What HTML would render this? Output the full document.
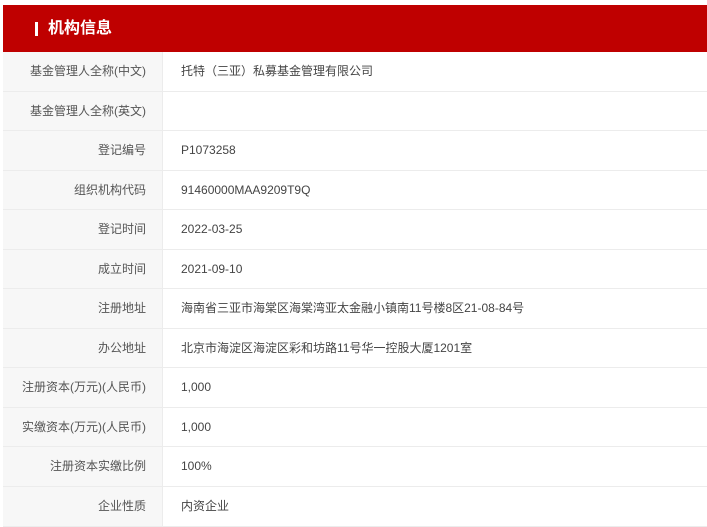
<!DOCTYPE html>
<html><head><meta charset="utf-8"><style>
body{margin:0;width:707px;height:524px;overflow:hidden;background:#fff;font-family:"Liberation Sans","Noto Sans CJK SC",sans-serif;}
.hd{position:absolute;left:3px;top:5px;width:704px;height:47px;background:#bf0000;color:#fff;font-weight:bold;font-size:16px;line-height:47px;}
.hd .bar{position:absolute;left:32px;top:17px;width:3px;height:14px;background:#fff;}
.hd span{position:absolute;left:45px;top:0;}
.tb{position:absolute;left:3px;top:52px;width:704px;}
.r{height:39.55px;border-bottom:1px solid #ececec;box-sizing:border-box;display:flex;font-size:12px;color:#555;}
.l{width:160px;background:#f7f7f7;border-right:1px solid #ececec;box-sizing:border-box;text-align:right;padding-right:16px;line-height:39px;}
.v{padding-left:18px;line-height:39px;color:#444;}
</style></head><body>
<div class="hd"><div class="bar"></div><span>机构信息</span></div>
<div class="tb">
<div class="r"><div class="l">基金管理人全称(中文)</div><div class="v">托特（三亚）私募基金管理有限公司</div></div>
<div class="r"><div class="l">基金管理人全称(英文)</div><div class="v"></div></div>
<div class="r"><div class="l">登记编号</div><div class="v">P1073258</div></div>
<div class="r"><div class="l">组织机构代码</div><div class="v">91460000MAA9209T9Q</div></div>
<div class="r"><div class="l">登记时间</div><div class="v">2022-03-25</div></div>
<div class="r"><div class="l">成立时间</div><div class="v">2021-09-10</div></div>
<div class="r"><div class="l">注册地址</div><div class="v">海南省三亚市海棠区海棠湾亚太金融小镇南11号楼8区21-08-84号</div></div>
<div class="r"><div class="l">办公地址</div><div class="v">北京市海淀区海淀区彩和坊路11号华一控股大厦1201室</div></div>
<div class="r"><div class="l">注册资本(万元)(人民币)</div><div class="v">1,000</div></div>
<div class="r"><div class="l">实缴资本(万元)(人民币)</div><div class="v">1,000</div></div>
<div class="r"><div class="l">注册资本实缴比例</div><div class="v">100%</div></div>
<div class="r"><div class="l">企业性质</div><div class="v">内资企业</div></div>
</div>
</body></html>
